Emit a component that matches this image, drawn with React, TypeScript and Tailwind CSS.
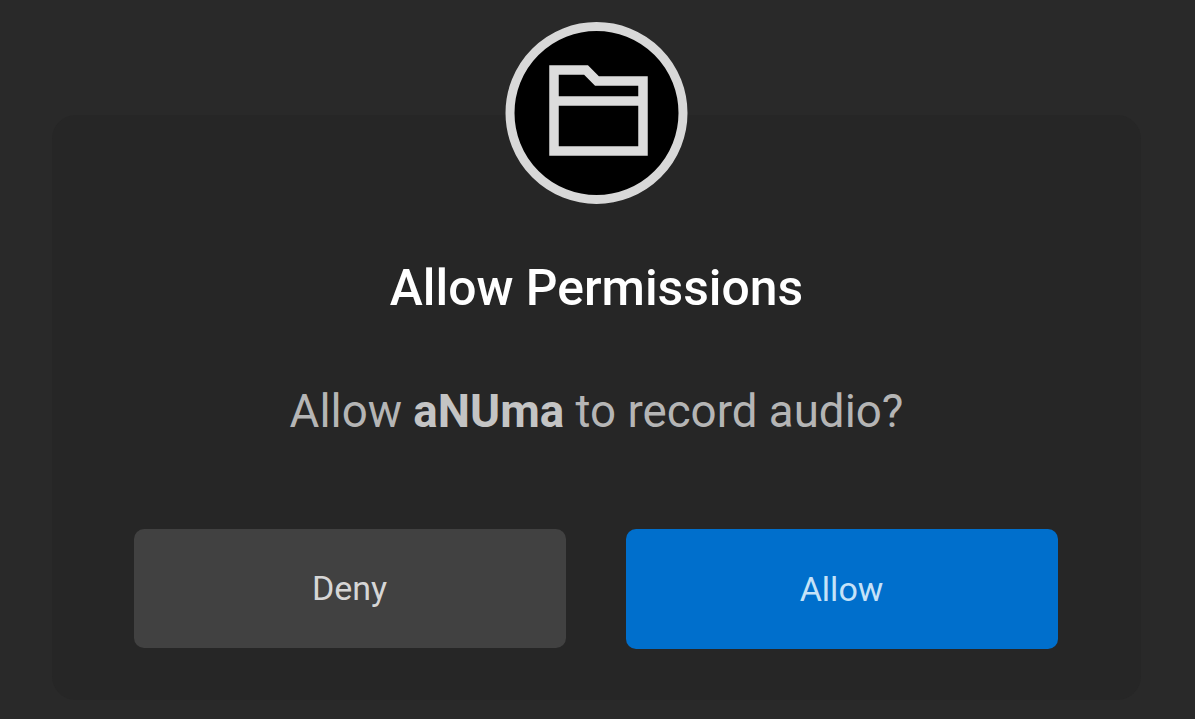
import React from 'react';

const FolderBadge: React.FC = () => (
  <svg viewBox="0 0 184 184" className="w-[184px] h-[184px] block" fill="none">
    <circle cx="91.5" cy="92" r="86.5" fill="#000000" stroke="#d8d8d8" strokeWidth="9" />
    <path
      d="M49 49H81L92 60H138V130H49ZM49 80H138"
      stroke="#dcdcdc"
      strokeWidth="9.5"
      strokeLinejoin="miter"
    />
  </svg>
);

const App: React.FC = () => {
  return (
    <div className="w-full h-[719px] overflow-hidden bg-[#292929] pl-[52px] pr-[54px] pt-[115px] font-['Roboto',sans-serif]">
      <div className="h-[585px] rounded-[24px] bg-[#262626] flex flex-col items-center">
        <div className="-mt-[94px]">
          <FolderBadge />
        </div>
        <h1 className="mt-[55px] text-[49.8px] leading-[56px] font-medium text-white">Allow Permissions</h1>
        <p className="mt-[70px] text-[45.7px] leading-[52px] text-[#b5b5b5]">
          Allow <span className="font-bold text-[#c4c4c4]">aNUma</span> to record audio?
        </p>
        <div className="mt-[91px] mr-[2px] flex gap-[60px]">
          <button className="w-[432px] h-[119px] rounded-[10px] bg-[#414141] text-[34px] text-[#d6d6d6]">Deny</button>
          <button className="w-[432px] h-[120px] rounded-[10px] bg-[#006fcc] text-[34px] text-[#c5e2f8]">Allow</button>
        </div>
      </div>
    </div>
  );
};

export default App;
